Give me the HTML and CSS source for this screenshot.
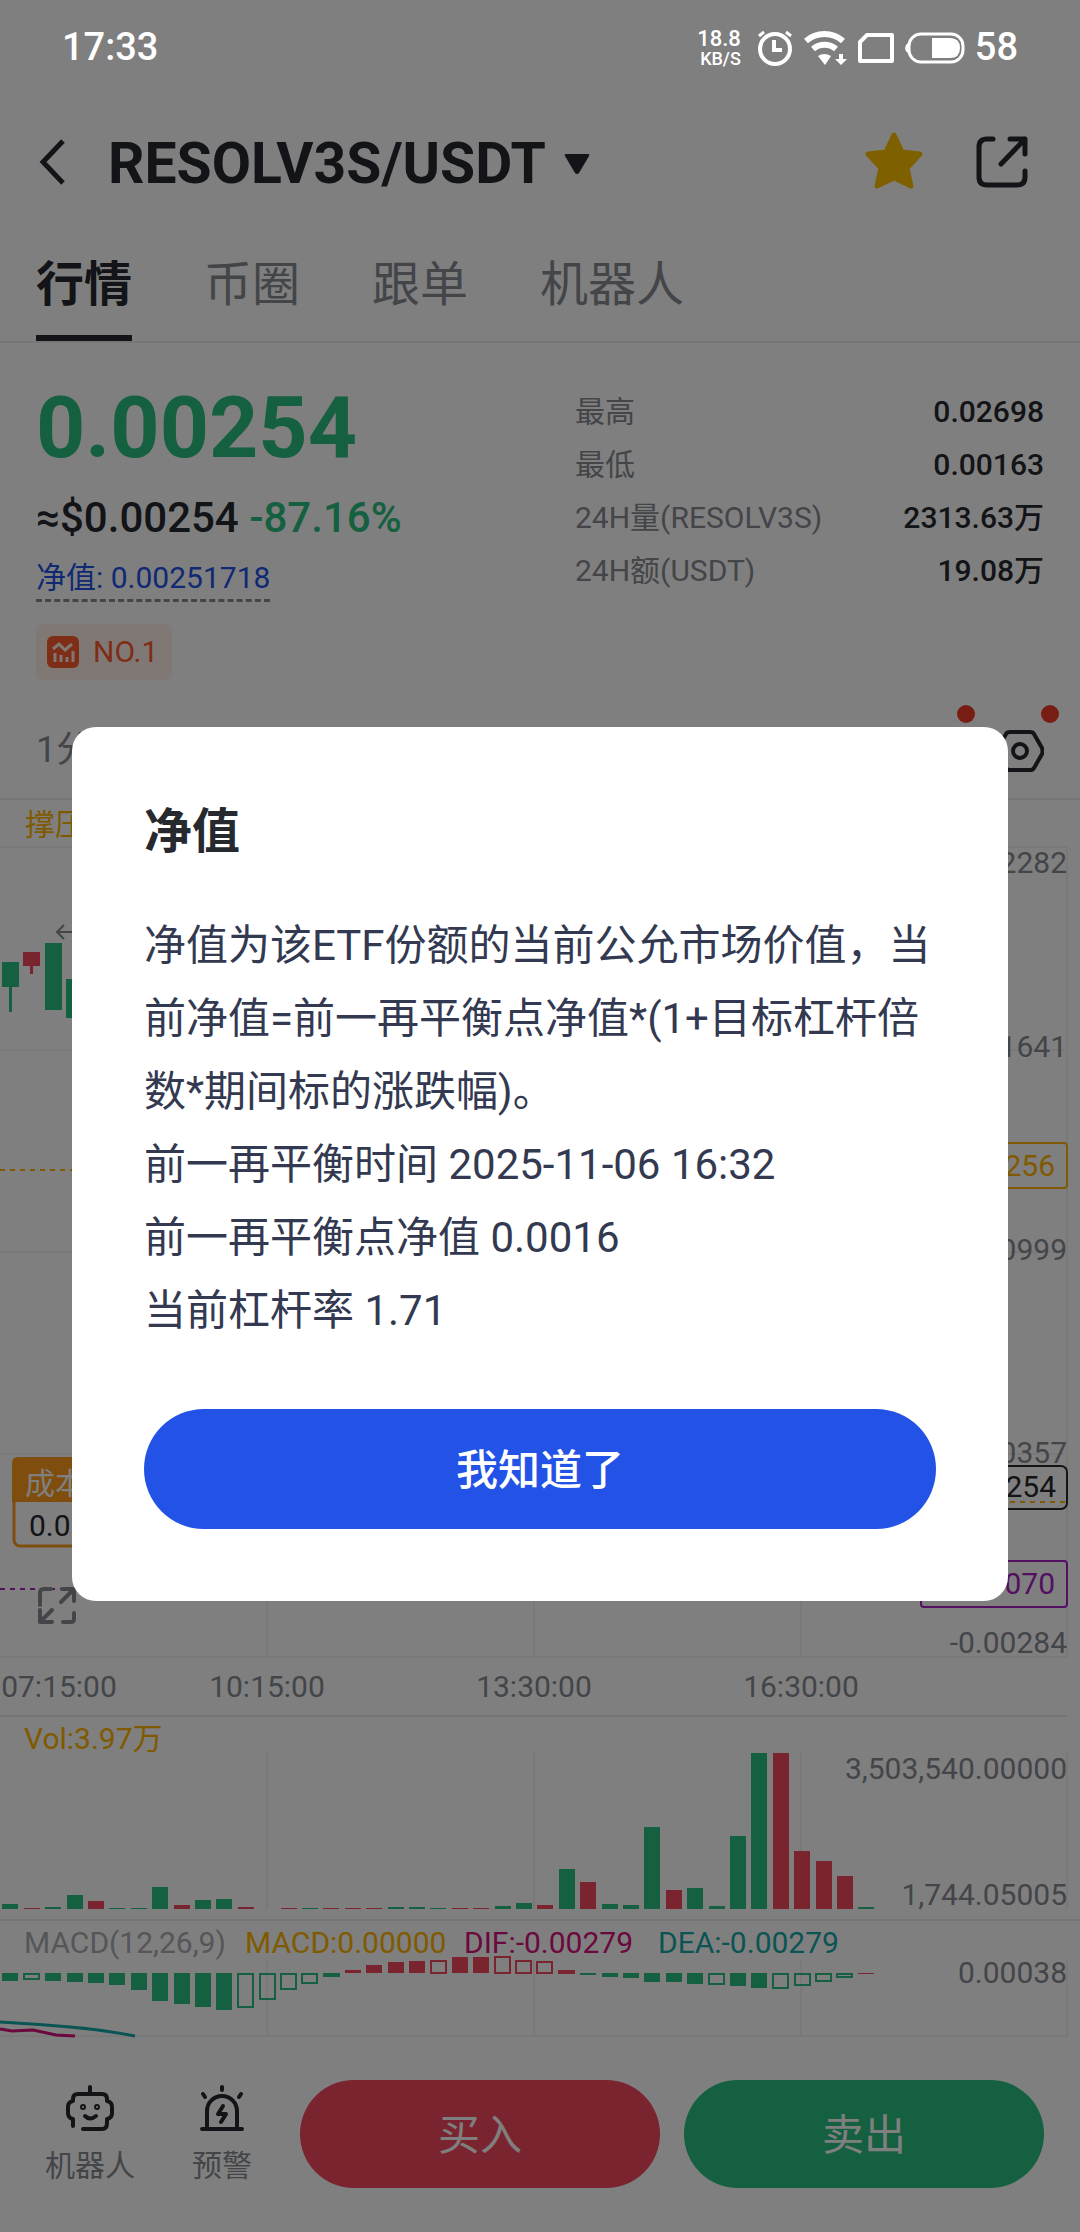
FILE: index.html
```html
<!DOCTYPE html>
<html lang="zh-CN">
<head>
<meta charset="utf-8">
<meta name="viewport" content="width=device-width, initial-scale=1">
<title>RESOLV3S/USDT</title>
<link rel="stylesheet" href="styles.css">
</head>
<body>
<div class="screen">
  <div class="status">
    <span class="status-time">17:33</span>
    <div class="status-icons">
      <span class="net"><span class="net-value">18.8</span><span class="net-unit">KB/S</span></span>
      <svg width="36" height="36" viewBox="0 0 36 36" fill="none" stroke="#fff" stroke-width="4"><circle cx="18" cy="19" r="15"/><path d="M17 10v10h8"/><path d="M2 6l5-4M34 6l-5-4" stroke-width="3"/></svg>
      <svg width="44" height="36" viewBox="0 0 44 36"><path d="M3 11a28 28 0 0 1 37 0M10 19a18 18 0 0 1 23 0" fill="none" stroke="#fff" stroke-width="6"/><path d="M15 26q6-4 13 0l-6 9z" fill="#fff"/><path d="M36 24h4v5h4l-6 6-6-6h4z" fill="#fff"/></svg>
      <svg width="38" height="36" viewBox="0 0 38 36"><path d="M3 31V12l7-7h25v26z" fill="none" stroke="#fff" stroke-width="4" stroke-linejoin="round"/></svg>
      <svg width="60" height="36" viewBox="0 0 60 36"><rect x="4" y="4" width="54" height="28" rx="12" fill="none" stroke="#fff" stroke-width="3"/><path d="M27 8h18q10 0 10 10t-10 10H27zM3 13v10q-3-2-3-5t3-5z" fill="#fff"/></svg>
      <span class="status-battery">58</span>
    </div>
  </div>

  <header class="header">
    <button class="icon-button" aria-label="返回"><svg width="32" height="48" viewBox="0 0 32 48" fill="none" stroke="#26292e" stroke-width="5"><path d="M27 3L7 24l20 21"/></svg></button>
    <button class="pair"><span>RESOLV3S/USDT</span><svg width="26" height="22" viewBox="0 0 26 22"><path d="M2 1h22q2 0 1 2L15 20q-2 2-4 0L1 3q-1-2 1-2z" fill="#26292e"/></svg></button>
    <div class="header-actions">
      <button class="icon-button" aria-label="收藏"><svg width="60" height="60" viewBox="0 2 60 60"><path d="M30 5l8 17 18 2-13 14 4 18-17-8-17 8 4-18L4 24l18-2z" fill="#ffc000" stroke="#ffc000" stroke-width="5" stroke-linejoin="round"/></svg></button>
      <button class="icon-button" aria-label="分享"><svg width="52" height="52" viewBox="0 0 52 52" fill="none" stroke="#26292e" stroke-width="5" stroke-linecap="round" stroke-linejoin="round"><path d="M17 3h-6q-8 0-8 8v30q0 8 8 8h30q8 0 8-8v-6M34 3h15v15M49 3L25 28"/></svg></button>
    </div>
  </header>

  <nav class="tabs">
    <a class="tab tab-active" href="#market">行情</a>
    <a class="tab" href="#circle">币圈</a>
    <a class="tab" href="#copy">跟单</a>
    <a class="tab" href="#bots">机器人</a>
  </nav>

  <section class="summary">
    <div class="quote">
      <div class="price">0.00254</div>
      <div class="change"><span>≈$0.00254</span> <span class="down">-87.16%</span></div>
      <a class="nav-link" href="#nav">净值: 0.00251718</a>
      <div class="rank"><svg width="32" height="32" viewBox="0 0 32 32"><rect width="32" height="32" rx="6" fill="#ff5a2e"/><path d="M6 13l6-5 6 6 7-6M8 17v9M14 19v7M20 21v5M26 15v11" fill="none" stroke="#fff0e8" stroke-width="3"/></svg><span>NO.1</span></div>
    </div>
    <dl class="stats">
      <dt>最高</dt><dd>0.02698</dd>
      <dt>最低</dt><dd>0.00163</dd>
      <dt>24H量(RESOLV3S)</dt><dd>2313.63万</dd>
      <dt>24H额(USDT)</dt><dd>19.08万</dd>
    </dl>
  </section>

  <div class="toolbar">
    <button class="period">1分</button>
    <div class="tools">
      <button class="tool" aria-label="指标"><span class="dot"></span></button>
      <button class="tool" aria-label="设置"><svg width="48" height="44" viewBox="0 0 48 44" fill="none" stroke="#26292e" stroke-width="4" stroke-linejoin="round"><path d="M14 3h20q3 0 4 2l8 14q1 3 0 6l-8 14q-1 2-4 2H14q-3 0-4-2L2 25q-1-3 0-6l8-14q1-2 4-2z"/><circle cx="24" cy="22" r="7"/></svg><span class="dot"></span></button>
    </div>
  </div>

  <svg class="chart" viewBox="0 800 1080 1247" role="img" aria-label="K线图">
    <path class="grid" d="M0 847H1067M0 1050H1067M0 1252H1067M0 1454H1067M0 1657H1067M267 847V1657M534 847V1657M801 847V1657M1067 847V1657M267 1752V1909M534 1752V1909M801 1752V1909M1067 1752V1909M267 1960V2036M534 1960V2036M801 1960V2036M1067 1960V2036M0 2036H1067"/>
    <path class="divider" d="M0 1716H1067M0 1920H1080"/>

    <text class="gold" x="25" y="835">撑压</text>
    <path class="up" d="M2 962h17v25h-7v25h-3v-25h-7zM45 943h17v67h-17zM66 979h17v39h-17z"/>
    <path class="fall" d="M23 952h17v14h-7v8h-3v-8h-7z"/>
    <path class="arrow" d="M64 925l-7 7 7 7M57 932h30"/>
    <path class="dash-gold" d="M0 1170H920M920 1502H1067"/>
    <path class="dash-purple" d="M0 1589H920"/>

    <rect class="cost-box" x="14" y="1459" width="150" height="87" rx="6"/>
    <path class="cost-head" d="M12 1502v-39q0-6 6-6h142q6 0 6 6v39z"/>
    <text class="white" x="25" y="1494">成本</text>
    <text class="ink" x="29" y="1536">0.00268</text>
    <path class="expand" d="M40 1605v-12q0-4 4-4h7M62 1589h12v12M73 1590l-12 12M74 1613v6q0 3-3 3h-8M40 1610v12h12M41 1621l11-11"/>

    <g class="axis">
      <text x="1067" y="873">0.02282</text>
      <text x="1067" y="1057">0.01641</text>
      <text x="1067" y="1260">0.00999</text>
      <text x="1067" y="1463">0.00357</text>
      <text x="1067" y="1653">-0.00284</text>
      <text x="1067" y="1779">3,503,540.00000</text>
      <text x="1067" y="1905">1,744.05005</text>
      <text x="1067" y="1983">0.00038</text>
      <rect class="tag tag-gold" x="933" y="1143" width="134" height="45" rx="3"/>
      <text class="gold" x="1055" y="1176">0.01256</text>
      <rect class="tag tag-ink" x="933" y="1466" width="134" height="43" rx="6"/>
      <text class="ink" x="1056" y="1497">0.00254</text>
      <rect class="tag tag-purple" x="921" y="1561" width="146" height="46" rx="3"/>
      <text class="purple" x="1055" y="1594">-0.00070</text>
    </g>
    <g class="times">
      <text x="59" y="1697">07:15:00</text>
      <text x="267" y="1697">10:15:00</text>
      <text x="534" y="1697">13:30:00</text>
      <text x="801" y="1697">16:30:00</text>
    </g>

    <text class="gold" x="24" y="1749">Vol:3.97万</text>
    <path class="up" d="M2 1909v-5h16v5zM45 1909v-2h16v2zM67 1909v-14h16v14zM109 1909v-1h16v1zM131 1909v-1h16v1zM152 1909v-22h16v22zM195 1909v-9h16v9zM216 1909v-10h16v10zM302 1909v-1h16v1zM388 1909v-2h16v2zM409 1909v-2h16v2zM430 1909v-1h16v1zM495 1909v-3h16v3zM516 1909v-6h16v6zM559 1909v-40h16v40zM602 1909v-5h16v5zM623 1909v-4h16v4zM644 1909v-82h16v82zM687 1909v-21h16v21zM709 1909v-3h16v3zM730 1909v-73h16v73zM751 1909v-156h16v156zM858 1909v-2h16v2z"/>
    <path class="fall" d="M24 1909v-1h16v1zM88 1909v-8h16v8zM174 1909v-4h16v4zM238 1909v-2h16v2zM281 1909v-1h16v1zM323 1909v-1h16v1zM345 1909v-1h16v1zM366 1909v-1h16v1zM452 1909v-1h16v1zM473 1909v-1h16v1zM537 1909v-4h16v4zM580 1909v-27h16v27zM666 1909v-19h16v19zM773 1909v-156h16v156zM794 1909v-58h16v58zM816 1909v-48h16v48zM837 1909v-33h16v33z"/>

    <text class="muted" x="24" y="1953">MACD(12,26,9)</text>
    <text class="gold" x="245" y="1953">MACD:0.00000</text>
    <text class="pink" x="464" y="1953">DIF:-0.00279</text>
    <text class="teal" x="658" y="1953">DEA:-0.00279</text>
    <path class="up" d="M2 1973h16v8h-16zM45 1973h16v8h-16zM67 1973h16v9h-16zM88 1973h16v10h-16zM109 1973h16v12h-16zM131 1973h16v17h-16zM152 1973h16v28h-16zM174 1973h16v31h-16zM195 1973h16v34h-16zM216 1973h16v37h-16zM580 1973h16v2h-16zM602 1973h16v4h-16zM623 1973h16v5h-16zM644 1973h16v9h-16zM666 1973h16v9h-16zM687 1973h16v11h-16zM730 1973h16v13h-16zM751 1973h16v15h-16z"/>
    <path class="up-outline" d="M24 1974h15v5h-15zM238 1974h15v33h-15zM260 1974h15v25h-15zM281 1974h15v15h-15zM302 1974h15v9h-15zM324 1974h15v2h-15zM709 1974h15v10h-15zM773 1974h15v14h-15zM795 1974h15v11h-15zM816 1974h15v7h-15zM837 1974h15v3h-15z"/>
    <path class="fall" d="M345 1973v-3h16v3zM366 1973v-8h16v8zM388 1973v-11h16v11zM409 1973v-12h16v12zM452 1973v-16h16v16zM473 1973v-16h16v16zM858 1974v-1h16v1z"/>
    <path class="fall-outline" d="M431 1973v-12h15v12zM495 1973v-16h15v16zM516 1973v-12h15v12zM537 1973v-11h15v11zM559 1973v-2h15v2z"/>
    <path class="line-teal" d="M0 2022Q36 2024 70 2027T135 2036"/>
    <path class="line-pink" d="M0 2029L12 2031L33 2030L56 2035L75 2036"/>
  </svg>

  <footer class="actions">
    <button class="shortcut"><svg width="50" height="48" viewBox="0 0 50 48" fill="none" stroke="#26292e" stroke-width="4" stroke-linecap="round" stroke-linejoin="round"><path d="M25 3v7M8 42v-7q-5-1-5-6v-6q0-5 5-6v-2q0-5 5-5h24q5 0 5 5v2q5 1 5 6v6q0 5-5 6v4q0 6-5 6H18"/><path d="M20 32q5 5 11 0"/><circle cx="18" cy="23" r="1"/><circle cx="32" cy="23" r="1"/></svg><span>机器人</span></button>
    <button class="shortcut"><svg width="50" height="48" viewBox="0 0 50 48" fill="none" stroke="#26292e" stroke-width="4" stroke-linecap="round" stroke-linejoin="round"><path d="M5 45h40M10 44V27a15 15 0 0 1 30 0v17M25 3v3M6 10l2 3M44 10l-2 3M26 22l-5 8h8l-5 8"/></svg><span>预警</span></button>
    <button class="trade buy">买入</button>
    <button class="trade sell">卖出</button>
  </footer>

  <div class="overlay">
    <section class="dialog" role="dialog" aria-modal="true" aria-labelledby="dialog-title">
      <h2 class="dialog-title" id="dialog-title">净值</h2>
      <p class="dialog-text">净值为该ETF份额的当前公允市场价值，当前净值=前一再平衡点净值*(1+目标杠杆倍数*期间标的涨跌幅)。<br>前一再平衡时间 2025-11-06 16:32<br>前一再平衡点净值 0.0016<br>当前杠杆率 1.71</p>
      <button class="dialog-button">我知道了</button>
    </section>
  </div>
</div>
</body>
</html>
```
FILE: styles.css
```css
* { box-sizing: border-box; }

body {
  margin: 0;
  background: #fff;
  color: #26292e;
  font-family: Roboto, "Noto Sans CJK SC", sans-serif;
  font-size: 30px;
  line-height: 1.2;
}

button {
  margin: 0;
  padding: 0;
  border: 0;
  background: none;
  color: inherit;
  font: inherit;
}

a { color: inherit; text-decoration: none; }
svg { display: block; }

.screen {
  position: relative;
  display: flex;
  flex-direction: column;
  min-height: 100vh;
}

.status {
  position: relative;
  z-index: 2;
  display: flex;
  align-items: center;
  justify-content: space-between;
  height: 96px;
  padding: 0 62px;
  color: #fff;
  font-size: 38px;
  font-weight: 500;
}
.status-icons { display: flex; align-items: center; gap: 10px; }
.net { display: flex; flex-direction: column; align-items: flex-end; margin-right: 6px; }
.net-value { font-size: 22px; line-height: 22px; }
.net-unit { font-size: 18px; line-height: 18px; }

.header {
  display: flex;
  align-items: center;
  height: 132px;
  padding: 0 52px 0 36px;
}
.pair {
  display: flex;
  align-items: center;
  gap: 18px;
  margin-left: 40px;
  padding-top: 4px;
  font-size: 57px;
  font-weight: 700;
}
.header-actions { display: flex; align-items: center; gap: 52px; margin-left: auto; }

.tabs {
  display: flex;
  gap: 72px;
  height: 115px;
  padding: 0 36px;
  border-bottom: 2px solid #ececef;
  color: #868b92;
  font-size: 48px;
}
.tab {
  display: flex;
  align-items: center;
  padding-top: 6px;
  border-bottom: 6px solid transparent;
}
.tab-active { border-color: #26292e; color: #26292e; font-weight: 700; }

.summary {
  display: flex;
  justify-content: space-between;
  height: 360px;
  padding: 38px 36px 0;
}
.quote { display: flex; flex-direction: column; align-items: flex-start; }
.price { color: #28c080; font-size: 86px; font-weight: 700; line-height: 94px; }
.change { margin-top: 13px; font-size: 42px; line-height: 60px; }
.change, .stats dd { font-weight: 500; }
.down { color: #28c080; }
.nav-link {
  margin-top: 9px;
  border-bottom: 3px dashed #868b92;
  color: #2253e6;
  line-height: 42px;
}
.rank {
  display: flex;
  align-items: center;
  gap: 14px;
  height: 56px;
  margin-top: 22px;
  padding: 0 14px 0 11px;
  border-radius: 6px;
  background: #fff0ea;
  color: #ff5a2e;
}

.stats {
  display: grid;
  grid-template-columns: auto auto;
  grid-auto-rows: 53px;
  align-items: center;
  width: 469px;
  margin: 4px 0 0;
}
.stats dt { color: #868b92; }
.stats dd { margin: 0; text-align: right; }

.toolbar {
  display: flex;
  align-items: center;
  justify-content: space-between;
  height: 97px;
  padding: 0 36px;
  border-bottom: 2px solid #ececef;
}
.period { color: #868b92; font-size: 36px; }
.tools { display: flex; gap: 36px; }
.tool { position: relative; width: 48px; height: 44px; }
.dot {
  position: absolute;
  top: -24px;
  right: -15px;
  width: 18px;
  height: 18px;
  border-radius: 50%;
  background: #f03a28;
}

.chart { width: 100%; height: auto; font-size: 30px; }
.grid { fill: none; stroke: #f2f2f5; stroke-width: 2; }
.divider { fill: none; stroke: #e9eaed; stroke-width: 2; }
.axis { fill: #868b92; text-anchor: end; }
.times { fill: #868b92; text-anchor: middle; }
.muted { fill: #a8acb2; }
.gold { fill: #ffb400; }
.ink { fill: #26292e; }
.white { fill: #fff; }
.purple { fill: #a81fc4; }
.pink { fill: #d6107a; }
.teal { fill: #14a8a8; }
.up { fill: #28c080; }
.fall { fill: #f4485f; }
.up-outline { fill: none; stroke: #28c080; stroke-width: 2; }
.fall-outline { fill: none; stroke: #f4485f; stroke-width: 2; }
.arrow { fill: none; stroke: #868b92; stroke-width: 2; }
.dash-gold { fill: none; stroke: #ffb400; stroke-width: 2; stroke-dasharray: 5 5; }
.dash-purple { fill: none; stroke: #a81fc4; stroke-width: 2; stroke-dasharray: 5 5; }
.cost-box { fill: #fff; stroke: #ff9a1a; stroke-width: 3; }
.cost-head { fill: #ff9a1a; }
.expand { fill: none; stroke: #868b92; stroke-width: 4; stroke-linecap: round; stroke-linejoin: round; }
.tag { fill: none; stroke-width: 2; }
.tag-gold { stroke: #ffb400; }
.tag-ink { stroke: #26292e; }
.tag-purple { stroke: #a81fc4; }
.line-teal { fill: none; stroke: #14a8a8; stroke-width: 3; }
.line-pink { fill: none; stroke: #d6107a; stroke-width: 3; }

.actions {
  display: flex;
  align-items: center;
  gap: 24px;
  margin-top: auto;
  padding: 33px 36px 44px;
}
.shortcut {
  display: flex;
  flex-direction: column;
  align-items: center;
  gap: 12px;
  width: 108px;
  padding-top: 4px;
  color: #868b92;
  line-height: 44px;
}
.trade {
  flex: 1;
  height: 108px;
  padding-top: 4px;
  border-radius: 54px;
  color: #fff;
  font-size: 42px;
}
.buy { background: #f4485f; }
.sell { background: #28c080; }

.overlay {
  position: absolute;
  inset: 0;
  z-index: 1;
  display: flex;
  align-items: center;
  padding: 96px 72px 0;
  background: rgba(0, 0, 0, 0.5);
}
.dialog {
  flex: 1;
  padding: 72px;
  border-radius: 24px;
  background: #fff;
}
.dialog-title { margin: 0; font-size: 48px; font-weight: 700; line-height: 66px; }
.dialog-text {
  margin: 44px 0 62px;
  color: #333950;
  font-size: 42px;
  line-height: 73px;
}
.dialog-button {
  width: 100%;
  height: 120px;
  padding-top: 4px;
  border-radius: 60px;
  background: #2253e6;
  color: #fff;
  font-size: 42px;
  font-weight: 500;
}
```
